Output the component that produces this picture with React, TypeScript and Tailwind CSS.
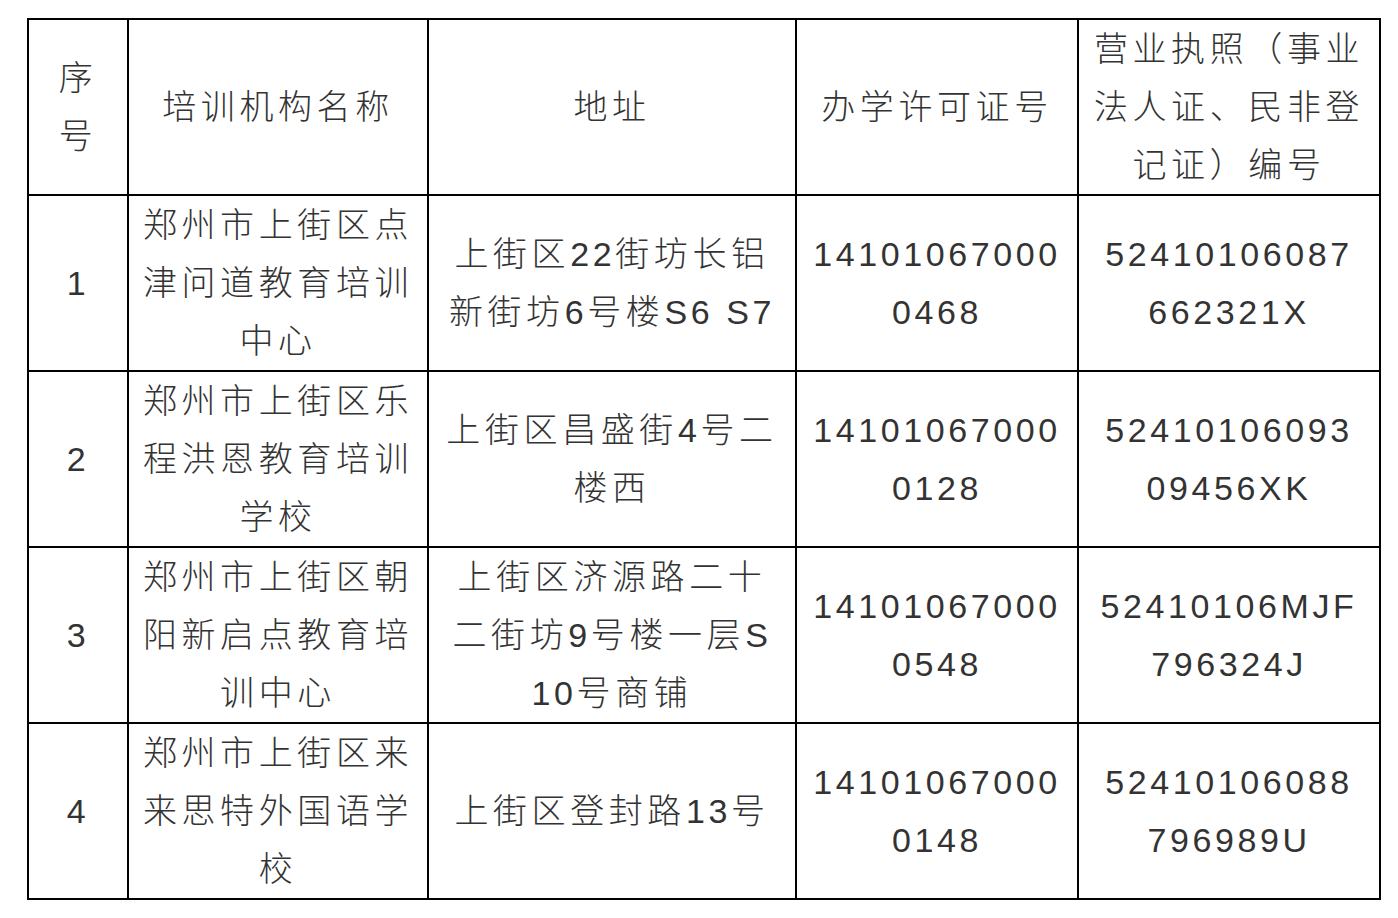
const header: string[][] = [
  ["序", "号"],
  ["培训机构名称"],
  ["地址"],
  ["办学许可证号"],
  ["营业执照（事业", "法人证、民非登", "记证）编号"],
];

const rows: string[][][] = [
  [
    ["1"],
    ["郑州市上街区点", "津问道教育培训", "中心"],
    ["上街区22街坊长铝", "新街坊6号楼S6 S7"],
    ["14101067000", "0468"],
    ["52410106087", "662321X"],
  ],
  [
    ["2"],
    ["郑州市上街区乐", "程洪恩教育培训", "学校"],
    ["上街区昌盛街4号二", "楼西"],
    ["14101067000", "0128"],
    ["52410106093", "09456XK"],
  ],
  [
    ["3"],
    ["郑州市上街区朝", "阳新启点教育培", "训中心"],
    ["上街区济源路二十", "二街坊9号楼一层S", "10号商铺"],
    ["14101067000", "0548"],
    ["52410106MJF", "796324J"],
  ],
  [
    ["4"],
    ["郑州市上街区来", "来思特外国语学", "校"],
    ["上街区登封路13号"],
    ["14101067000", "0148"],
    ["52410106088", "796989U"],
  ],
];

// latin runs get tighter spacing than the chinese characters
function Line({ text }: { text: string }) {
  const parts = text.split(/([0-9A-Z ]+)/).filter(Boolean);
  return (
    <div className="leading-[58px] whitespace-nowrap">
      {parts.map((p, i) =>
        /^[0-9A-Z ]+$/.test(p) ? (
          <span key={i} className="tracking-[3.6px]">{p}</span>
        ) : (
          <span key={i} className="tracking-[4.6px] font-light">{p}</span>
        )
      )}
    </div>
  );
}

function Cell({ lines }: { lines: string[] }) {
  return (
    <div className="bg-white flex flex-col items-center justify-center">
      {lines.map((l, i) => (
        <Line key={i} text={l} />
      ))}
    </div>
  );
}

export default function App() {
  return (
    <div className="w-[1398px] h-[918px] bg-white pt-[18px] pl-[27px]">
      <div
        className="grid w-[1354px] bg-black gap-[2px] p-[2px] grid-cols-[98px_298px_366px_280px_300px] grid-rows-[174px_174px_174px_174px_174px] text-[34px] text-[#333333]"
        style={{ fontFamily: '"Liberation Sans", "Noto Sans CJK SC", sans-serif' }}
      >
        {header.map((h, i) => (
          <Cell key={"h" + i} lines={h} />
        ))}
        {rows.map((r, ri) =>
          r.map((c, ci) => <Cell key={ri + "-" + ci} lines={c} />)
        )}
      </div>
    </div>
  );
}
